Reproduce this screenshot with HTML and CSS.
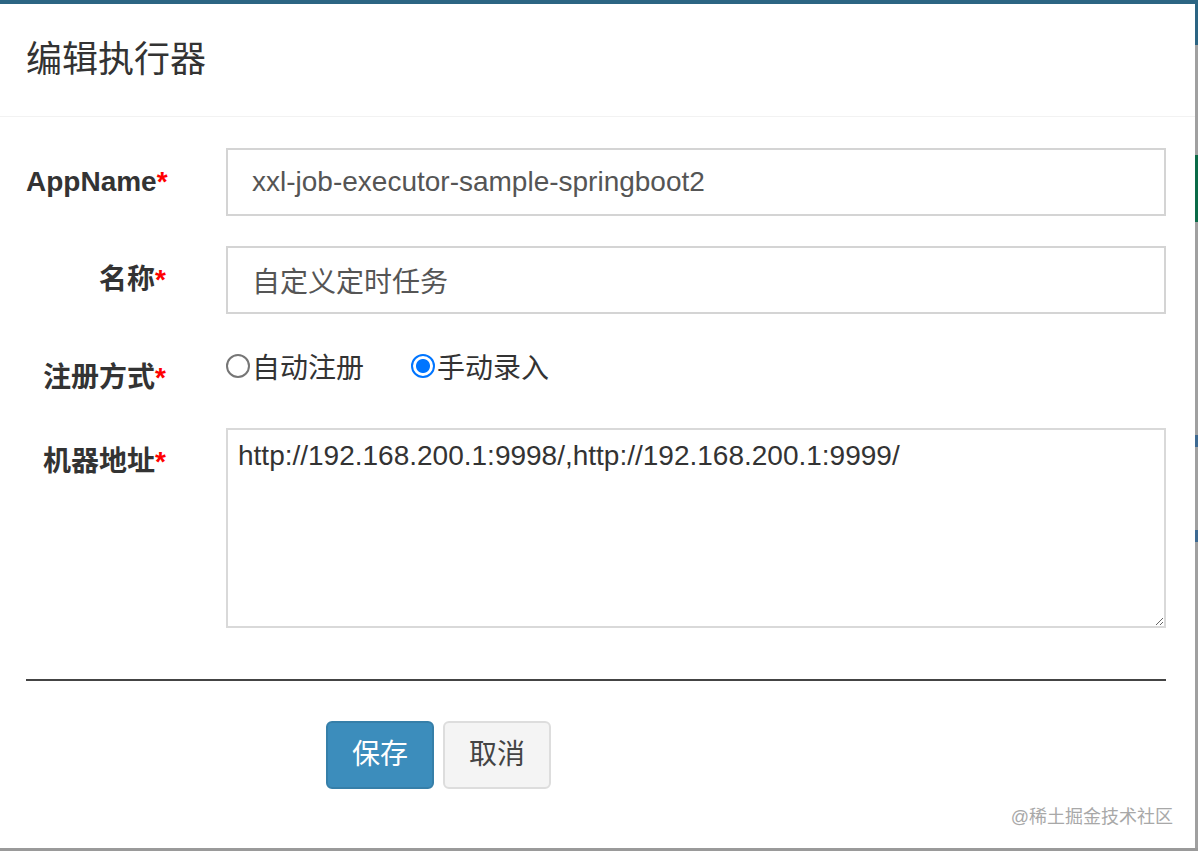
FILE: index.html
```html
<!DOCTYPE html>
<html lang="zh-CN">
<head>
<meta charset="utf-8">
<title>编辑执行器</title>
<link rel="stylesheet" href="styles.css">
</head>
<body>
<div class="page">
  <div class="modal">
    <div class="modal-header">
      <h4 class="modal-title">编辑执行器</h4>
    </div>
    <div class="modal-body">
      <div class="form-row">
        <label class="form-label">AppName<span class="req">*</span></label>
        <div class="control">
          <input class="text-input" type="text" value="xxl-job-executor-sample-springboot2" readonly>
        </div>
      </div>
      <div class="form-row">
        <label class="form-label">名称<span class="req">*</span></label>
        <div class="control">
          <input class="text-input" type="text" value="自定义定时任务" readonly>
        </div>
      </div>
      <div class="form-row">
        <label class="form-label">注册方式<span class="req">*</span></label>
        <div class="control radios">
          <span class="radio-item"><span class="radio"></span>自动注册</span>
          <span class="radio-item"><span class="radio checked"></span>手动录入</span>
        </div>
      </div>
      <div class="form-row">
        <label class="form-label">机器地址<span class="req">*</span></label>
        <div class="control">
          <textarea class="text-area" readonly>http://192.168.200.1:9998/,http://192.168.200.1:9999/</textarea>
        </div>
      </div>
      <hr class="divider">
      <div class="actions">
        <button class="btn btn-primary" type="button">保存</button>
        <button class="btn btn-default" type="button">取消</button>
      </div>
    </div>
    <div class="watermark">@稀土掘金技术社区</div>
  </div>
  <div class="side">
    <div class="seg seg-teal"></div>
    <div class="seg seg-grey1"></div>
    <div class="seg seg-green"></div>
    <div class="seg seg-grey2"></div>
    <div class="seg seg-blue"></div>
    <div class="seg seg-grey3"></div>
    <div class="seg seg-blue"></div>
    <div class="seg seg-grey4"></div>
  </div>
</div>
<div class="bottom-line"></div>
</body>
</html>
```
FILE: styles.css
```css
html, body {
  margin: 0;
  padding: 0;
  background: #a0a0a0;
}
body {
  width: 1198px;
  height: 851px;
  overflow: hidden;
  font-family: "Liberation Sans", "Noto Sans CJK SC", sans-serif;
  color: #333;
}
.page {
  display: flex;
  height: 848px;
}
.modal {
  position: relative;
  width: 1195px;
  height: 848px;
  box-sizing: border-box;
  background: #fff;
  border-top: 4px solid #2c6583;
}
.modal-header {
  height: 112px;
  border-bottom: 1px solid #f2f2f2;
  padding-left: 26px;
}
.modal-title {
  margin: 0;
  font-size: 36px;
  line-height: 112px;
  font-weight: normal;
  color: #333;
}
.modal-body {
  padding: 31px 29px 0 26px;
}
.form-row {
  display: flex;
  margin-bottom: 30px;
}
.form-label {
  width: 140px;
  flex: none;
  text-align: right;
  font-size: 28px;
  line-height: 40px;
  padding-top: 14px;
  font-weight: bold;
  color: #333;
}
.req {
  color: #f00;
}
.control {
  flex: 1;
  margin-left: 60px;
}
.text-input {
  display: block;
  width: 100%;
  height: 68px;
  box-sizing: border-box;
  border: 2px solid #d4d4d4;
  border-radius: 0;
  padding: 0 24px;
  font-family: "Liberation Sans", "Noto Sans CJK SC", sans-serif;
  font-size: 28px;
  color: #555;
  background: #fff;
  outline: none;
}
.radios {
  display: flex;
  align-items: center;
  height: 54px;
  box-sizing: border-box;
  padding-top: 5px;
  padding-bottom: 9px;
  font-size: 28px;
  line-height: 40px;
  color: #333;
}
.radio-item {
  display: flex;
  align-items: center;
  margin-right: 47px;
}
.radio {
  width: 24px;
  height: 24px;
  box-sizing: border-box;
  border: 2px solid #767676;
  border-radius: 50%;
  margin-right: 2px;
  margin-bottom: 6px;
  background: #fff;
}
.radio.checked {
  border-color: #0075ff;
  background: radial-gradient(circle, #0075ff 0 6.5px, #fff 7.5px);
}
.text-area {
  display: block;
  width: 100%;
  height: 200px;
  box-sizing: border-box;
  border: 2px solid #d9d9d9;
  border-radius: 0;
  padding: 6px 10px;
  font-family: "Liberation Sans", "Noto Sans CJK SC", sans-serif;
  font-size: 28px;
  line-height: 40px;
  color: #333;
  background: #fff;
  outline: none;
  resize: vertical;
}
.divider {
  margin: 51px 0 0 0;
  border: 0;
  height: 2px;
  background: #444;
}
.actions {
  display: flex;
  gap: 9px;
  margin-top: 40px;
  padding-left: 300px;
}
.btn {
  height: 68px;
  box-sizing: border-box;
  padding: 0 24px;
  border-radius: 6px;
  font-family: "Liberation Sans", "Noto Sans CJK SC", sans-serif;
  font-size: 28px;
  line-height: 64px;
  cursor: pointer;
}
.btn-primary {
  background: #3c8dbc;
  border: 2px solid #367fa9;
  color: #fff;
}
.btn-default {
  background: #f4f4f4;
  border: 2px solid #ddd;
  color: #444;
}
.watermark {
  position: absolute;
  right: 22px;
  bottom: 20px;
  font-size: 18px;
  line-height: 22px;
  color: #a8a8a8;
}
.side {
  width: 3px;
  display: flex;
  flex-direction: column;
}
.seg { flex: none; }
.seg-teal { height: 45px; background: #2c6583; }
.seg-grey1 { height: 110px; background: #a0a0a0; }
.seg-green { height: 67px; background: #0b6b48; }
.seg-grey2 { height: 213px; background: #a0a0a0; }
.seg-blue { height: 12px; background: #3e6a92; }
.seg-grey3 { height: 83px; background: #a0a0a0; }
.seg-grey4 { flex: 1; background: #a0a0a0; }
.bottom-line {
  height: 3px;
  background: #9a9a9a;
}
```
